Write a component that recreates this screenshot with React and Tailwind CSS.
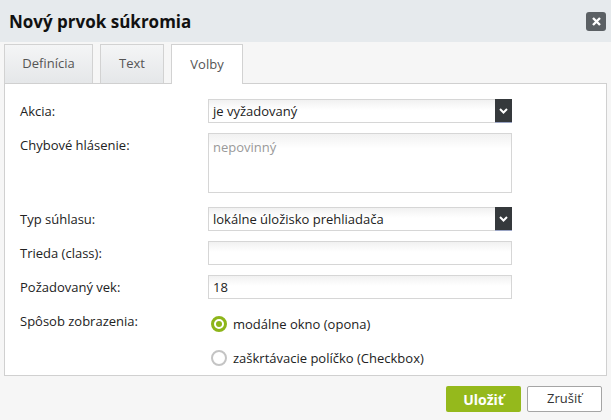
import { useState } from 'react';

const FONT = { fontFamily: '"Open Sans", "Noto Sans", sans-serif' };

const inputCls =
  'w-full h-[24px] border border-[#d6d6d6] bg-linear-to-b from-[#f1f1f1] to-white to-[45%] px-[4px] text-[13px] text-[#222] leading-[22px]';

// select with dark chevron button on the right
const FakeSelect = ({ value }) => (
  <div className="flex h-[24px] w-full">
    <div className="flex-1 border border-r-0 border-[#d6d6d6] bg-linear-to-b from-[#f1f1f1] to-white to-[45%] px-[4px] text-[13px] text-[#222] leading-[22px]">
      {value}
    </div>
    <div className="w-[17px] bg-[#35393c] flex items-center justify-center border-b border-[#9aa4c4]">
      <svg width="9" height="6" viewBox="0 0 9 6">
        <path d="M1 1l3.5 3.5L8 1" stroke="#fff" strokeWidth="2" fill="none" />
      </svg>
    </div>
  </div>
);

const Row = ({ label, children, className = '' }) => (
  <div className={`flex items-start ${className}`}>
    <div className="w-[188px] pt-[2px] leading-[20px] text-[13px] text-[#222]">{label}</div>
    <div className="w-[304px]">{children}</div>
  </div>
);

const Radio = ({ checked, label, onClick }) => (
  <button type="button" onClick={onClick} className="flex items-center gap-[6px] h-[20px] ml-[3px]">
    {checked ? (
      <span className="w-[16px] h-[16px] rounded-full border-[3px] border-[#8db51a] bg-white flex items-center justify-center">
        <span className="w-[6px] h-[6px] rounded-full bg-[#8db51a]" />
      </span>
    ) : (
      <span className="w-[16px] h-[16px] rounded-full border-2 border-[#c4c4c4] bg-white" />
    )}
    <span className="text-[13px] text-[#222] leading-[20px]">{label}</span>
  </button>
);

export default function App() {
  const [mode, setMode] = useState('modal');
  const tabs = [
    { name: 'Definícia', w: 'w-[89px]' },
    { name: 'Text', w: 'w-[64px]' },
    { name: 'Volby', w: 'w-[72px]', active: true },
  ];

  return (
    <div style={FONT} className="w-[611px] h-[420px] bg-[#f6f6f6] flex flex-col">
      {/* header */}
      <div className="h-[42px] bg-[#e6eaed] flex items-center justify-between pl-[9px] pr-[5px]">
        <h1 className="text-[17px] font-bold text-[#111] leading-none">Nový prvok súkromia</h1>
        <button className="w-[20px] h-[19px] rounded-[3px] bg-[#5b6064] flex items-center justify-center">
          <svg width="9" height="9" viewBox="0 0 9 9">
            <path d="M1 1l7 7M8 1l-7 7" stroke="#fff" strokeWidth="2.4" />
          </svg>
        </button>
      </div>

      {/* tabs */}
      <div className="px-[4px] pt-[2px]">
        <div className="flex gap-[7px] h-[39px]">
          {tabs.map((t) => (
            <div
              key={t.name}
              className={`${t.w} flex items-center justify-center text-[13px] text-[#555] border border-b-0 border-[#d2d2d2] ${
                t.active ? 'bg-white h-[40px] relative z-10' : 'bg-linear-to-b from-[#f4f5f6] to-[#e5e7e9] h-[39px]'
              }`}
            >
              {t.name}
            </div>
          ))}
        </div>

        {/* panel */}
        <div className="h-[293px] border border-[#d0d0d0] bg-white px-[15px] pt-[15px]">
          <Row label="Akcia:">
            <FakeSelect value="je vyžadovaný" />
          </Row>
          <Row label="Chybové hlásenie:" className="mt-[10px]">
            <div className="h-[60px] w-full border border-[#d6d6d6] bg-linear-to-b from-[#f1f1f1] to-white to-[25%] px-[4px] pt-[3px] text-[13px] text-[#999] leading-[20px]">
              nepovinný
            </div>
          </Row>
          <Row label="Typ súhlasu:" className="mt-[14px]">
            <FakeSelect value="lokálne úložisko prehliadača" />
          </Row>
          <Row label="Trieda (class):" className="mt-[10px]">
            <div className={inputCls}></div>
          </Row>
          <Row label="Požadovaný vek:" className="mt-[10px]">
            <div className={inputCls}>18</div>
          </Row>
          <Row label="Spôsob zobrazenia:" className="mt-[10px]">
            <div className="flex flex-col gap-[14px] pt-[5px]">
              <Radio checked={mode === 'modal'} label="modálne okno (opona)" onClick={() => setMode('modal')} />
              <Radio checked={mode === 'checkbox'} label="zaškrtávacie políčko (Checkbox)" onClick={() => setMode('checkbox')} />
            </div>
          </Row>
        </div>
      </div>

      {/* footer */}
      <div className="flex justify-end gap-[6px] pr-[9px] pt-[10px]">
        <button className="w-[75px] h-[26px] rounded-[2px] bg-[#95b91c] text-white font-bold text-[14px]">Uložiť</button>
        <button className="w-[75px] h-[26px] rounded-[2px] bg-white border border-[#a5a5a5] text-[#333] text-[13px]">Zrušiť</button>
      </div>
    </div>
  );
}
